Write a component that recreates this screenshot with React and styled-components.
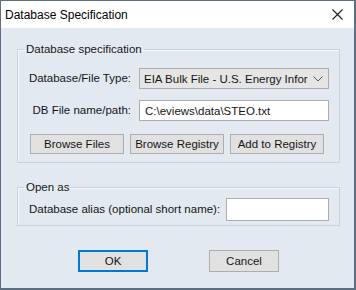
import React from "react";
import styled, { createGlobalStyle } from "styled-components";

const GlobalStyle = createGlobalStyle`
  html, body {
    margin: 0;
    padding: 0;
    background: #ffffff;
  }
  * {
    box-sizing: border-box;
  }
`;

const App = () => {
  return (
    <>
      <GlobalStyle />
      <Window>
        <TitleBar>
          <span>Database Specification</span>
          <CloseButton>
            <svg width="11" height="11" viewBox="0 0 11 11">
              <path d="M0.5 0.5 L10.5 10.5 M10.5 0.5 L0.5 10.5" stroke="#1b1b1b" strokeWidth="1.1" />
            </svg>
          </CloseButton>
        </TitleBar>
        <Body>
          <Group $top={15}>
            <Legend>Database specification</Legend>
            <FieldGrid>
              <Label>Database/File Type:</Label>
              <Select>
                <span>EIA Bulk File - U.S. Energy Infor</span>
                <svg width="10" height="6" viewBox="0 0 10 6">
                  <path d="M0.5 0.5 L5 5 L9.5 0.5" fill="none" stroke="#555" strokeWidth="1" />
                </svg>
              </Select>
              <Label>DB File name/path:</Label>
              <TextInput $width={190}>C:\eviews\data\STEO.txt</TextInput>
            </FieldGrid>
            <ButtonRow>
              <Button>Browse Files</Button>
              <Button>Browse Registry</Button>
              <Button>Add to Registry</Button>
            </ButtonRow>
          </Group>
          <Group $top={18} $pad={4}>
            <Legend>Open as</Legend>
            <AliasRow>
              <Label>Database alias (optional short name):</Label>
              <TextInput $width={103} $height={23} />
            </AliasRow>
          </Group>
          <Footer>
            <DialogButton $default>OK</DialogButton>
            <DialogButton>Cancel</DialogButton>
          </Footer>
        </Body>
      </Window>
    </>
  );
};

const Window = styled.div`
  width: 356px;
  height: 290px;
  display: flex;
  flex-direction: column;
  background: #e3e9f1;
  border: 1px solid #5e6e82;
  border-bottom-width: 2px;
  border-right-width: 2px;
  font-family: "Liberation Sans", Arial, sans-serif;
  font-size: 11.5px;
  color: #151515;
`;

const TitleBar = styled.div`
  height: 27px;
  flex: none;
  display: flex;
  align-items: center;
  justify-content: space-between;
  padding-left: 4px;
  background: #ffffff;
  font-size: 12px;
  color: #000;
`;

const CloseButton = styled.div`
  width: 34px;
  height: 27px;
  display: flex;
  align-items: center;
  justify-content: center;
`;

const Body = styled.div`
  flex: 1;
  display: flex;
  flex-direction: column;
  padding: 0 14px 0 16px;
`;

const Group = styled.fieldset`
  margin: ${(p) => p.$top}px 0 0 0;
  padding: ${(p) => (p.$pad != null ? p.$pad : 12)}px 9px ${(p) => (p.$pad != null ? p.$pad : 8)}px 8px;
  border: 1px solid #cbd2dc;
  box-shadow: inset 1px 1px 0 #f4f7fb;
  width: 323px;
  min-width: 0;
`;

const Legend = styled.legend`
  margin-left: -2px;
  padding: 0 2px;
  line-height: 13px;
`;

const FieldGrid = styled.div`
  display: grid;
  grid-template-columns: 105px 190px;
  column-gap: 8px;
  row-gap: 11px;
  align-items: center;
`;

const Label = styled.div`
  text-align: right;
  white-space: nowrap;
  line-height: 13px;
`;

const Select = styled.div`
  height: 21px;
  display: flex;
  align-items: center;
  justify-content: space-between;
  padding: 0 5px 0 4px;
  background: #e5e5e5;
  border: 1px solid #acacac;
  white-space: nowrap;
  overflow: hidden;
`;

const TextInput = styled.div`
  width: ${(p) => p.$width}px;
  height: ${(p) => p.$height || 21}px;
  display: flex;
  align-items: center;
  padding-left: 5px;
  background: #ffffff;
  border: 1px solid #abadb3;
  white-space: nowrap;
`;

const ButtonRow = styled.div`
  display: flex;
  gap: 6px;
  margin-top: 13px;
  padding-left: 4px;
`;

const Button = styled.div`
  width: 94px;
  height: 20px;
  display: flex;
  align-items: center;
  justify-content: center;
  background: #e1e1e1;
  border: 1px solid #adadad;
`;

const AliasRow = styled.div`
  display: flex;
  align-items: center;
  gap: 6px;
  padding-left: 3px;
`;

const Footer = styled.div`
  display: flex;
  justify-content: center;
  gap: 61px;
  margin-top: 24px;
`;

const DialogButton = styled.div`
  width: 70px;
  height: 22px;
  display: flex;
  align-items: center;
  justify-content: center;
  background: #e1e1e1;
  border: ${(p) => (p.$default ? "2px solid #0078d7" : "1px solid #adadad")};
`;

export default App;
